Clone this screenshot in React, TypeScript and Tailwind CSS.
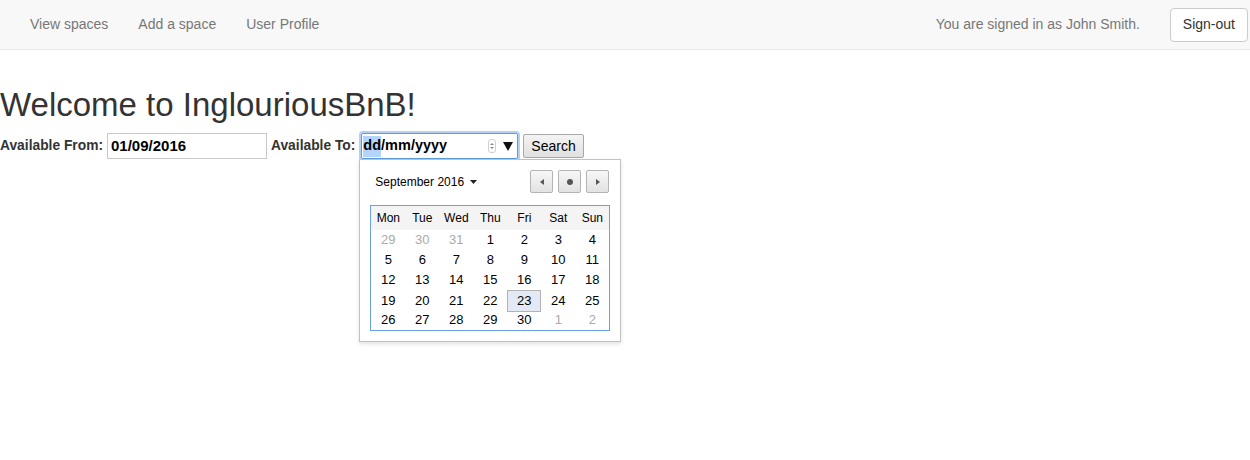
const navLinks = ["View spaces", "Add a space", "User Profile"];
const dayNames = ["Mon", "Tue", "Wed", "Thu", "Fri", "Sat", "Sun"];

// September 2016, weeks start on Monday
const weeks = [
  [29, 30, 31, 1, 2, 3, 4],
  [5, 6, 7, 8, 9, 10, 11],
  [12, 13, 14, 15, 16, 17, 18],
  [19, 20, 21, 22, 23, 24, 25],
  [26, 27, 28, 29, 30, 1, 2],
];

const NavButton = ({ children }: any) => (
  <button className="flex h-[23px] w-[23px] items-center justify-center rounded-[2px] border border-[#b4b4b4] bg-gradient-to-b from-[#f7f7f7] to-[#e2e2e2]">
    {children}
  </button>
);

const Calendar = () => (
  <div className="absolute left-[-2px] top-full z-10 w-[262px] border border-[#c2c2c2] bg-white p-[10px] font-normal shadow-[0_2px_4px_rgba(0,0,0,0.12)]">
    <div className="flex h-[23px] items-center justify-between">
      <div className="flex items-center pl-[5px] text-[12px] text-black">
        September 2016
        <svg width="7" height="4" viewBox="0 0 7 4" className="ml-[6px]">
          <path d="M0 0h7L3.5 4z" fill="#222" />
        </svg>
      </div>
      <div className="mr-[1px] flex gap-[5px]">
        <NavButton>
          <svg width="4" height="6" viewBox="0 0 4 6">
            <path d="M4 0v6L0 3z" fill="#555" />
          </svg>
        </NavButton>
        <NavButton>
          <div className="h-[6px] w-[6px] rounded-full bg-[#555]" />
        </NavButton>
        <NavButton>
          <svg width="4" height="6" viewBox="0 0 4 6">
            <path d="M0 0v6l4-3z" fill="#555" />
          </svg>
        </NavButton>
      </div>
    </div>
    <div className="mt-[12px] w-[240px] border border-[#6aa1e6]">
      <div className="grid h-[24px] grid-cols-7 items-center bg-[#f4f4f4] text-center text-[12px] text-black">
        {dayNames.map((d) => (
          <div key={d}>{d}</div>
        ))}
      </div>
      {weeks.map((week, wi) => (
        <div key={wi} className="grid h-[20px] grid-cols-7 text-center text-[13px]">
          {week.map((day, di) => {
            const outside = (wi === 0 && day > 20) || (wi === 4 && day < 10);
            const today = wi === 3 && day === 23;
            return (
              <div
                key={di}
                className={
                  today
                    ? "flex items-center justify-center border border-[#b3b3b3] bg-[#e4eaf5] text-black"
                    : outside
                    ? "flex items-center justify-center text-[#aaa]"
                    : "flex items-center justify-center text-black"
                }
              >
                {day}
              </div>
            );
          })}
        </div>
      ))}
    </div>
  </div>
);

export default function App() {
  return (
    <div className="min-h-[460px] bg-white font-['Liberation_Sans',Arial,sans-serif] text-[14px] text-[#333]">
      <nav className="flex h-[50px] items-center justify-between border-b border-[#e7e7e7] bg-[#f8f8f8]">
        <div className="flex pl-[15px]">
          {navLinks.map((link) => (
            <a key={link} className="px-[15px] text-[#777]">
              {link}
            </a>
          ))}
        </div>
        <div className="mr-[2px] flex items-center gap-[30px]">
          <span className="text-[#777]">You are signed in as John Smith.</span>
          <button className="h-[34px] rounded-[4px] border border-[#ccc] bg-white px-[12px] text-[#333]">
            Sign-out
          </button>
        </div>
      </nav>

      <h1 className="mt-[37px] text-[33px] font-medium leading-[36px] text-[#333]">
        Welcome to InglouriousBnB!
      </h1>

      <form className="mt-[10px] flex h-[26px] items-center text-[13.8px] font-bold text-[#333]">
        <label>Available From:</label>
        <div className="ml-[4px] flex h-[26px] w-[160px] items-center border border-[#c8c8c8] pl-[3px] text-[15px] text-black">
          01/09/2016
        </div>
        <label className="ml-[4px]">Available To:</label>
        <div className="relative ml-[6px]">
          <div className="flex h-[26px] w-[157px] items-center rounded-[2px] border border-[#5b9dd9] pl-[1px] pr-[4px] text-[14.5px] text-black shadow-[0_0_0_2px_#b3d1f4]">
            <span className="flex h-[21px] items-center bg-[#b3d5fd]">dd</span>
            <span>/mm/yyyy</span>
            <div className="ml-auto flex h-[14px] w-[8px] flex-col items-center justify-center gap-[2px] rounded-[3px] border border-[#d0d0d0]">
              <svg width="4" height="2" viewBox="0 0 4 2">
                <path d="M0 2L2 0l2 2z" fill="#888" />
              </svg>
              <svg width="4" height="2" viewBox="0 0 4 2">
                <path d="M0 0h4L2 2z" fill="#888" />
              </svg>
            </div>
            <svg width="10" height="9" viewBox="0 0 10 9" className="ml-[7px]">
              <path d="M0 0h10L5 9z" fill="#111" />
            </svg>
          </div>
          <Calendar />
        </div>
        <button
          type="button"
          className="ml-[5px] h-[24px] rounded-[2px] border border-[#a8a8a8] bg-gradient-to-b from-[#f4f4f4] to-[#e0e0e0] px-[7px] text-[14px] font-normal text-black"
        >
          Search
        </button>
      </form>
    </div>
  );
}
